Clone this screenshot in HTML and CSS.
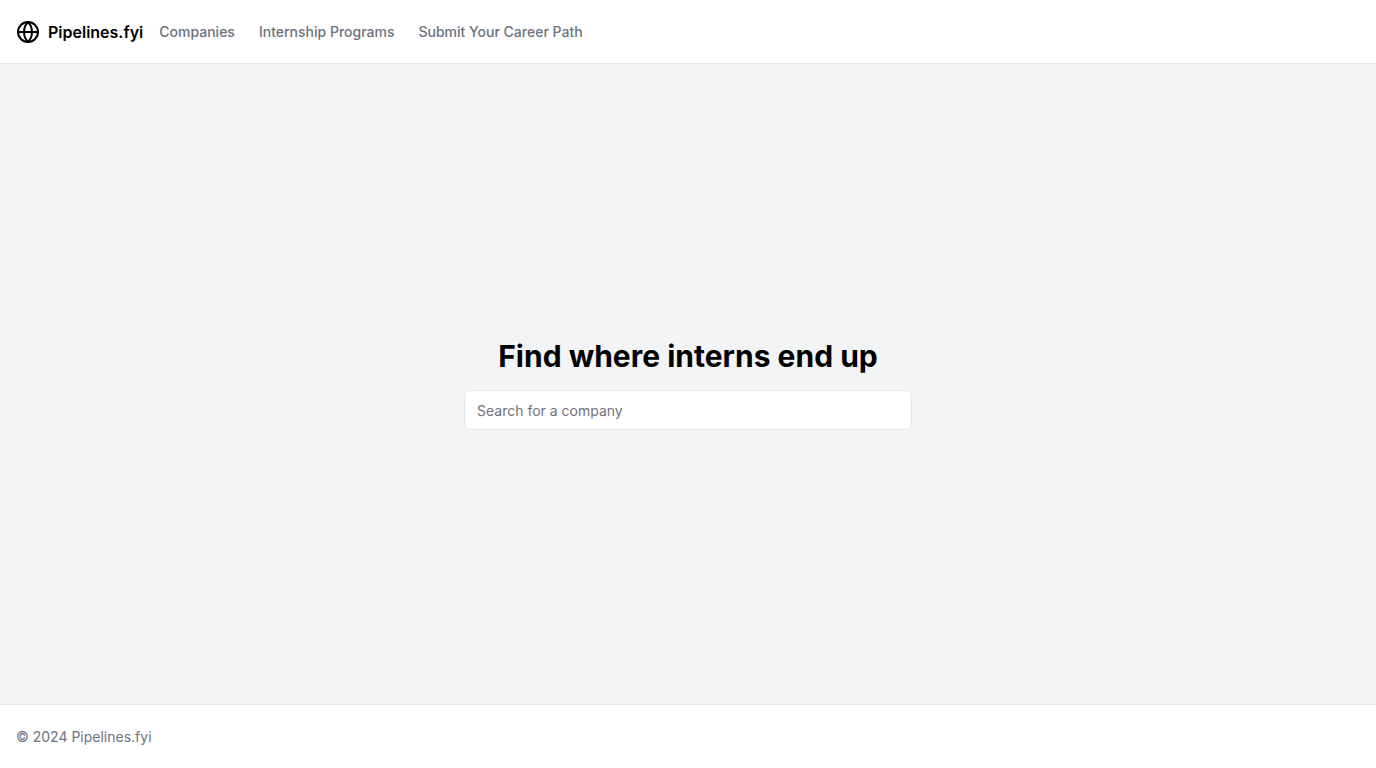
FILE: index.html
```html
<!DOCTYPE html>
<html lang="en">
<head>
<meta charset="utf-8">
<meta name="viewport" content="width=device-width, initial-scale=1">
<title>Pipelines.fyi</title>
<link rel="stylesheet" href="styles.css">
</head>
<body>
<div class="page">
  <header class="header">
    <a class="brand" href="#">
      <svg class="brand-icon" viewBox="0 0 24 24" fill="none" stroke="currentColor" stroke-width="2" stroke-linecap="round" stroke-linejoin="round" aria-hidden="true">
        <circle cx="12" cy="12" r="10"/>
        <path d="M12 2a14.5 14.5 0 0 0 0 20 14.5 14.5 0 0 0 0-20"/>
        <path d="M2 12h20"/>
      </svg>
      <span>Pipelines.fyi</span>
    </a>
    <nav class="nav">
      <a class="nav-link" href="#">Companies</a>
      <a class="nav-link" href="#">Internship Programs</a>
      <a class="nav-link" href="#">Submit Your Career Path</a>
    </nav>
  </header>
  <main class="main">
    <div class="search">
      <h1 class="title">Find where interns end up</h1>
      <input class="search-input" type="text" placeholder="Search for a company" aria-label="Search for a company">
    </div>
  </main>
  <footer class="footer">
    <p class="copyright">© 2024 Pipelines.fyi</p>
  </footer>
</div>
</body>
</html>
```
FILE: styles.css
```css
*, *::before, *::after {
  box-sizing: border-box;
}

body {
  margin: 0;
  font-family: Inter, "Liberation Sans", sans-serif;
  font-size: 16px;
  line-height: 24px;
  color: #000;
  background: #fff;
}

.page {
  display: flex;
  flex-direction: column;
  min-height: 100vh;
}

.header {
  display: flex;
  align-items: center;
  gap: 16px;
  height: 64px;
  padding: 0 16px;
  border-bottom: 1px solid #e5e7eb;
}

.brand {
  display: flex;
  align-items: center;
  gap: 8px;
  font-weight: 600;
  color: #000;
  text-decoration: none;
}

.brand-icon {
  width: 24px;
  height: 24px;
}

.nav {
  display: flex;
  align-items: center;
  gap: 24px;
}

.nav-link {
  font-size: 14px;
  line-height: 20px;
  font-weight: 500;
  color: #6b7280;
  text-decoration: none;
}

.main {
  display: flex;
  flex: 1;
  align-items: center;
  justify-content: center;
  padding: 16px;
  background: #f3f4f6;
}

.search {
  display: flex;
  flex-direction: column;
  gap: 16px;
  width: 100%;
  max-width: 448px;
}

.title {
  margin: 0;
  font-size: 30px;
  line-height: 36px;
  font-weight: 700;
  text-align: center;
}

.search-input {
  width: 100%;
  height: 40px;
  padding: 8px 12px;
  border: 1px solid #e5e7eb;
  border-radius: 6px;
  background: #fff;
  color: #000;
  font-family: inherit;
  font-size: 14px;
  line-height: 20px;
}

.search-input::placeholder {
  color: #71717a;
  opacity: 1;
}

.footer {
  display: flex;
  align-items: center;
  height: 64px;
  padding: 0 16px;
  border-top: 1px solid #e5e7eb;
}

.copyright {
  margin: 0;
  font-size: 14px;
  line-height: 20px;
  color: #6b7280;
}
```
